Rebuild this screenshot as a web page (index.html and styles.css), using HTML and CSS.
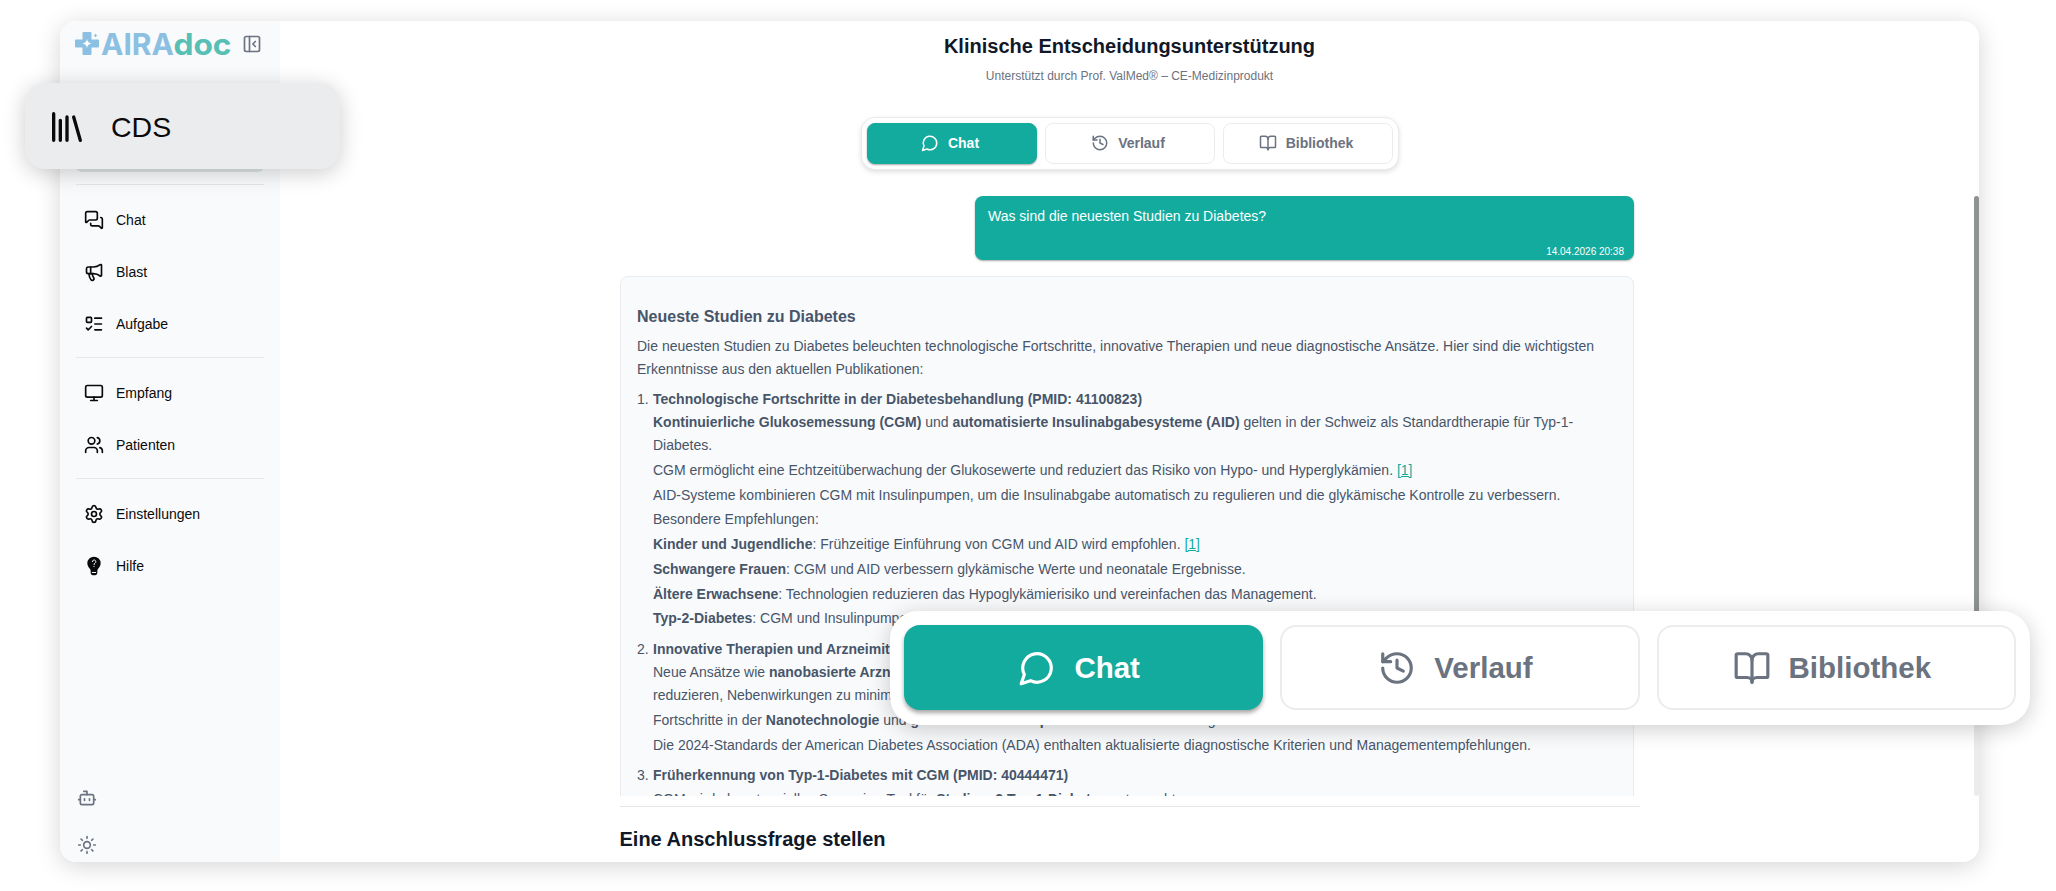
FILE: index.html
```html
<!DOCTYPE html>
<html lang="de">
<head>
    <meta charset="UTF-8">
    <meta name="viewport" content="width=device-width, initial-scale=1.0">
    <title>AIRAdoc - CDS</title>
    <link rel="stylesheet" href="styles.css">
</head>
<body>
    <!-- icons -->
    <svg class="sprite">
        <symbol id="i-panel" viewBox="0 0 24 24"><rect x="3" y="3" width="18" height="18" rx="2"/><path d="M9 3v18M16 15l-3-3 3-3"/></symbol>
        <symbol id="i-library" viewBox="0 0 24 24"><path d="m16 6 4 14M12 6v14M8 8v12M4 4v16"/></symbol>
        <symbol id="i-messages" viewBox="0 0 24 24"><path d="M16 10a2 2 0 0 1-2 2H6.828a2 2 0 0 0-1.414.586l-2.202 2.202A.71.71 0 0 1 2 14.286V4a2 2 0 0 1 2-2h10a2 2 0 0 1 2 2z"/><path d="M20 9a2 2 0 0 1 2 2v10.286a.71.71 0 0 1-1.212.502l-2.202-2.202A2 2 0 0 0 17.172 19H10a2 2 0 0 1-2-2v-1"/></symbol>
        <symbol id="i-megaphone" viewBox="0 0 24 24"><path d="M11 6a13 13 0 0 0 8.4-2.8A1 1 0 0 1 21 4v12a1 1 0 0 1-1.6.8A13 13 0 0 0 11 14H5a2 2 0 0 1-2-2V8a2 2 0 0 1 2-2z"/><path d="M6 14a12 12 0 0 0 2.4 7.2 2 2 0 0 0 3.2-2.4A8 8 0 0 1 10 14M8 6v8"/></symbol>
        <symbol id="i-todo" viewBox="0 0 24 24"><rect x="3" y="4" width="6" height="6" rx="1"/><path d="m3 17 2 2 4-4M13 5h8M13 12h8M13 19h8"/></symbol>
        <symbol id="i-monitor" viewBox="0 0 24 24"><rect x="2" y="3" width="20" height="14" rx="2"/><path d="M8 21h8M12 17v4"/></symbol>
        <symbol id="i-users" viewBox="0 0 24 24"><path d="M16 21v-2a4 4 0 0 0-4-4H6a4 4 0 0 0-4 4v2"/><circle cx="9" cy="7" r="4"/><path d="M22 21v-2a4 4 0 0 0-3-3.870M16 3.130a4 4 0 0 1 0 7.750"/></symbol>
        <symbol id="i-settings" viewBox="0 0 24 24"><path d="M9.671 4.136a2.34 2.34 0 0 1 4.659 0 2.34 2.34 0 0 0 3.319 1.915 2.34 2.34 0 0 1 2.33 4.033 2.34 2.34 0 0 0 0 3.831 2.34 2.34 0 0 1-2.33 4.033 2.34 2.34 0 0 0-3.319 1.915 2.34 2.34 0 0 1-4.659 0 2.34 2.34 0 0 0-3.32-1.915 2.34 2.34 0 0 1-2.33-4.033 2.34 2.34 0 0 0 0-3.831A2.34 2.34 0 0 1 6.35 6.051a2.34 2.34 0 0 0 3.319-1.915"/><circle cx="12" cy="12" r="3"/></symbol>
        <symbol id="i-help" viewBox="0 0 24 24"><path d="M12 .8a8 8 0 0 0-8 8c0 3.400 1.700 5 3.200 6.700.6.700.8 1.400.8 2.500v2.500a2.500 2.500 0 0 0 2.500 2.500h3a2.500 2.500 0 0 0 2.500-2.500V18c0-1.100.2-1.800.8-2.500C18.300 13.800 20 12.200 20 8.800a8 8 0 0 0-8-8z" fill="currentColor" stroke="none"/><path d="M10 6.700a2.100 2.100 0 1 1 3.200 1.900c-.9.500-1.200.9-1.200 1.700M12 12.600v.2M10 19.800h4" stroke="#f9fafc" stroke-width="1.200"/></symbol>
        <symbol id="i-bot" viewBox="0 0 24 24"><path d="M12 8V4H8"/><rect x="4" y="8" width="16" height="12" rx="2"/><path d="M2 14h2M20 14h2M15 13v2M9 13v2"/></symbol>
        <symbol id="i-sun" viewBox="0 0 24 24"><circle cx="12" cy="12" r="4"/><path d="M12 2v2M12 20v2M4.930 4.930l1.410 1.410M17.660 17.660l1.410 1.410M2 12h2M20 12h2M6.340 17.660l-1.410 1.410M19.070 4.930l-1.410 1.410"/></symbol>
        <symbol id="i-chat" viewBox="0 0 24 24"><path d="M7.900 20A9 9 0 1 0 4 16.100L2 22Z"/></symbol>
        <symbol id="i-history" viewBox="0 0 24 24"><path d="M3 12a9 9 0 1 0 9-9 9.750 9.750 0 0 0-6.740 2.740L3 8"/><path d="M3 3v5h5M12 7v5l4 2"/></symbol>
        <symbol id="i-book" viewBox="0 0 24 24"><path d="M12 7v14"/><path d="M3 18a1 1 0 0 1-1-1V4a1 1 0 0 1 1-1h5a4 4 0 0 1 4 4 4 4 0 0 1 4-4h5a1 1 0 0 1 1 1v13a1 1 0 0 1-1 1h-6a3 3 0 0 0-3 3 3 3 0 0 0-3-3z"/></symbol>
    </svg>

    <div class="window">
        <aside class="sidebar">
            <div class="sidebar-head">
                <svg class="logo" viewBox="0 0 156 26">
                    <path class="logo-cross" d="M8.500 1h7q1 0 1 1v6.500H23q1 0 1 1v6q0 1-1 1h-6.500V23q0 1-1 1h-7q-1 0-1-1v-6.500H1q-1 0-1-1v-6q0-1 1-1h6.500V2q0-1 1-1z"/>
                    <path class="logo-star" d="M12 8q.6 3.900 4.500 4.500-3.900.6-4.500 4.500-.6-3.900-4.500-4.500Q11.400 11.900 12 8z"/>
                    <path class="logo-cross" d="M20.500 2.500q.3 1.700 2 2-1.700.3-2 2-.3-1.700-2-2 1.700-.3 2-2z"/>
                    <text class="logo-aira" x="26" y="23.500" textLength="73" lengthAdjust="spacingAndGlyphs">AIRA</text>
                    <text class="logo-doc" x="98.500" y="23.500" textLength="58" lengthAdjust="spacingAndGlyphs">doc</text>
                </svg>
                <svg class="icon toggle"><use href="#i-panel"/></svg>
            </div>
            <nav class="nav">
                <div class="nav-item active"></div>
                <hr>
                <a class="nav-item"><svg class="icon"><use href="#i-messages"/></svg>Chat</a>
                <a class="nav-item"><svg class="icon"><use href="#i-megaphone"/></svg>Blast</a>
                <a class="nav-item"><svg class="icon"><use href="#i-todo"/></svg>Aufgabe</a>
                <hr>
                <a class="nav-item"><svg class="icon"><use href="#i-monitor"/></svg>Empfang</a>
                <a class="nav-item"><svg class="icon"><use href="#i-users"/></svg>Patienten</a>
                <hr>
                <a class="nav-item"><svg class="icon"><use href="#i-settings"/></svg>Einstellungen</a>
                <a class="nav-item"><svg class="icon"><use href="#i-help"/></svg>Hilfe</a>
            </nav>
            <div class="sidebar-foot">
                <svg class="icon"><use href="#i-bot"/></svg>
                <svg class="icon"><use href="#i-sun"/></svg>
            </div>
        </aside>

        <main class="main">
            <h1>Klinische Entscheidungsunterstützung</h1>
            <p class="subtitle">Unterstützt durch Prof. ValMed® – CE-Medizinprodukt</p>

            <div class="tabs">
                <a class="tab on"><svg class="icon"><use href="#i-chat"/></svg>Chat</a>
                <a class="tab"><svg class="icon"><use href="#i-history"/></svg>Verlauf</a>
                <a class="tab"><svg class="icon"><use href="#i-book"/></svg>Bibliothek</a>
            </div>

            <div class="scroll">
                <div class="thread">
                    <div class="question">
                        <p>Was sind die neuesten Studien zu Diabetes?</p>
                        <time>14.04.2026 20:38</time>
                    </div>
                    <div class="answer">
                        <h3>Neueste Studien zu Diabetes</h3>
                        <p class="intro">Die neuesten Studien zu Diabetes beleuchten technologische Fortschritte, innovative Therapien und neue diagnostische Ansätze. Hier sind die wichtigsten Erkenntnisse aus den aktuellen Publikationen:</p>
                        <ol>
                            <li><b>Technologische Fortschritte in der Diabetesbehandlung (PMID: 41100823)</b>
                                <ul>
                                    <li><b>Kontinuierliche Glukosemessung (CGM)</b> und <b>automatisierte Insulinabgabesysteme (AID)</b> gelten in der Schweiz als Standardtherapie für Typ-1-Diabetes.</li>
                                    <li>CGM ermöglicht eine Echtzeitüberwachung der Glukosewerte und reduziert das Risiko von Hypo- und Hyperglykämien. <a class="ref">[1]</a></li>
                                    <li>AID-Systeme kombinieren CGM mit Insulinpumpen, um die Insulinabgabe automatisch zu regulieren und die glykämische Kontrolle zu verbessern.</li>
                                    <li>Besondere Empfehlungen:</li>
                                    <li><b>Kinder und Jugendliche</b>: Frühzeitige Einführung von CGM und AID wird empfohlen. <a class="ref">[1]</a></li>
                                    <li><b>Schwangere Frauen</b>: CGM und AID verbessern glykämische Werte und neonatale Ergebnisse.</li>
                                    <li><b>Ältere Erwachsene</b>: Technologien reduzieren das Hypoglykämierisiko und vereinfachen das Management.</li>
                                    <li><b>Typ-2-Diabetes</b>: CGM und Insulinpumpen</li>
                                </ul>
                            </li>
                            <li><b>Innovative Therapien und Arzneimittel</b>
                                <ul>
                                    <li>Neue Ansätze wie <b>nanobasierte Arzneimittel</b><br>reduzieren, Nebenwirkungen zu minimieren</li>
                                    <li>Fortschritte in der <b>Nanotechnologie</b> und <b>genbasierten Therapien</b> werden intensiv verfolgt.</li>
                                    <li>Die 2024-Standards der American Diabetes Association (ADA) enthalten aktualisierte diagnostische Kriterien und Managementempfehlungen.</li>
                                </ul>
                            </li>
                            <li><b>Früherkennung von Typ-1-Diabetes mit CGM (PMID: 40444471)</b>
                                <ul>
                                    <li>CGM wird als potenzielles Screening-Tool für <b>Stadium 2 Typ-1-Diabetes</b> untersucht.</li>
                                </ul>
                            </li>
                        </ol>
                    </div>
                </div>
                <div class="scrollbar"><div class="thumb"></div></div>
            </div>

            <div class="followup">
                <h2>Eine Anschlussfrage stellen</h2>
            </div>
        </main>
    </div>

    <!-- enlarged details floating over the window -->
    <div class="zoom-nav"><svg class="icon"><use href="#i-library"/></svg>CDS</div>

    <div class="zoom-tabs">
        <a class="tab on"><svg class="icon"><use href="#i-chat"/></svg>Chat</a>
        <a class="tab"><svg class="icon"><use href="#i-history"/></svg>Verlauf</a>
        <a class="tab"><svg class="icon"><use href="#i-book"/></svg>Bibliothek</a>
    </div>
</body>
</html>
```

FILE: styles.css
```css
*{margin:0;padding:0;box-sizing:border-box;}

body{
    display:flow-root;
    width:2056px;height:891px;
    overflow:hidden;
    position:relative;
    background:#fff;
    font-family:"Liberation Sans", Arial, sans-serif;
    font-size:14px;
    color:#0a0a0a;
}
ul, ol{list-style:none;}
hr{border:0;height:1px;background:#e5e7eb;}

.sprite{display:none;}
.icon{
    width:20px;height:20px;
    flex:none;
    fill:none;
    stroke:currentColor;
    stroke-width:2;
    stroke-linecap:round;
    stroke-linejoin:round;
}

.window{
    display:flex;
    width:1919px;height:841px;
    margin:21px 0 0 60px;
    border-radius:16px;
    overflow:hidden;
    background:#fff;
    box-shadow:0 4px 24px rgba(0,0,0,.17);
}

/* sidebar */
.sidebar{
    display:flex;
    flex-direction:column;
    width:220px;
    background:#f9fafc;
}
.sidebar-head{
    display:flex;
    align-items:center;
    justify-content:space-between;
    padding:10px 18px 0 15px;
}
.logo{width:156px;height:26px;overflow:visible;}
.logo text{font-family:Inter, "Open Sans", sans-serif;font-size:29.5px;font-weight:700;}
.logo-cross, .logo-aira{fill:#8cc0e3;}
.logo-doc{fill:#57bfb5;}
.logo-star{fill:#fff;}
.toggle{color:#6b7280;}
.nav{
    display:flex;
    flex-direction:column;
    gap:8px;
    padding:71px 16px 0;
}
.nav hr{margin:4px 0;}
.nav-item{
    display:flex;
    align-items:center;
    gap:12px;
    height:44px;
    padding:1px 8px 0;
    border-radius:6px;
}
.nav-item.active{background:#dce5e4;}
.sidebar-foot{
    display:flex;
    flex-direction:column;
    gap:27px;
    margin-top:auto;
    padding:0 17px 7px;
    color:#6b7280;
}

/* main */
.main{
    flex:1;
    display:flex;
    flex-direction:column;
    align-items:center;
}
h1, h2{font-size:20px;line-height:28px;color:#111827;}
h1{margin-top:11px;}
.subtitle{
    margin-top:8px;
    font-size:12px;line-height:16px;
    color:#6b7280;
}
.tabs{
    display:flex;
    gap:8px;
    width:538px;height:53px;
    margin-top:33px;
    padding:5px;
    border:1px solid #e9eaec;
    border-radius:14px;
    background:#fff;
    box-shadow:0 2px 5px rgba(0,0,0,.13);
}
.tab{
    flex:1;
    display:flex;
    align-items:center;
    justify-content:center;
    gap:9px;
    padding:0 3px 1px 0;
    border:1px solid #ebecee;
    border-radius:8px;
    font-weight:bold;
    color:#6b7280;
}
.tab.on{
    border-color:#13ab9e;
    background:#13ab9e;
    color:#fff;
    box-shadow:0 1px 2px rgba(0,0,0,.35);
}
.tab .icon{width:18px;height:18px;}

.scroll{
    display:flex;
    justify-content:flex-end;
    align-self:stretch;
    height:600px;
    margin-top:26px;
    overflow:hidden;
}
.thread{
    width:1014px;
    margin-right:340px;
}
.scrollbar{
    width:5px;
    border-radius:3px;
    background:#ebebeb;
}
.thumb{height:430px;border-radius:3px;background:#8f9392;}

.question{
    display:flex;
    flex-direction:column;
    justify-content:space-between;
    width:659px;height:64px;
    margin:0 0 16px auto;
    padding:11px 10px 2px 13px;
    border-radius:8px;
    background:#13ab9e;
    color:#fff;
    box-shadow:0 1px 2px rgba(0,0,0,.35);
}
.question p{line-height:18px;}
.question time{
    align-self:flex-end;
    font-size:10px;line-height:12px;
}
.answer{
    padding:25px 16px;
    border:1px solid #e9ebee;
    border-radius:8px;
    background:#f9fafc;
    line-height:22.75px;
    color:#475569;
}
.answer h3{font-size:16px;line-height:30px;}
.intro{margin:3px 0 7.5px;}
.answer ol{counter-reset:nr;}
.answer ol > li{
    position:relative;
    margin-bottom:8px;
    padding-left:16px;
    counter-increment:nr;
}
.answer ol > li::before{
    content:counter(nr) ".";
    position:absolute;left:0;
}
.answer ul{padding-top:.5px;}
.answer ul li{margin-bottom:2px;}
.answer ul li:last-child{margin-bottom:0;}
.ref{color:#13ab9e;text-decoration:underline;}

.followup{
    width:1020px;
    margin-top:10px;
    padding-top:18px;
    border-top:1px solid #e5e7eb;
}

/* floating details */
.zoom-nav, .zoom-tabs{
    position:absolute;
    display:flex;
    box-shadow:0 4px 22px rgba(0,0,0,.2);
}
.zoom-nav{
    left:25px;top:83px;
    align-items:center;
    gap:24px;
    width:315px;height:86px;
    padding:2px 0 0 22px;
    border-radius:20px;
    background:#ebecee;
    font-size:28.5px;
}
.zoom-nav .icon{width:40px;height:40px;}
.zoom-tabs{
    left:890px;top:611px;
    gap:17px;
    width:1140px;height:114px;
    padding:14px 14px 15px;
    border-radius:28px;
    background:#fff;
}
.zoom-tabs .tab{
    gap:18px;
    padding:0 9px 0 0;
    border-width:2px;
    border-radius:16px;
    font-size:29.5px;
}
.zoom-tabs .tab.on{box-shadow:0 3px 4px rgba(0,0,0,.35);}
.zoom-tabs .icon{width:38px;height:38px;}
```
